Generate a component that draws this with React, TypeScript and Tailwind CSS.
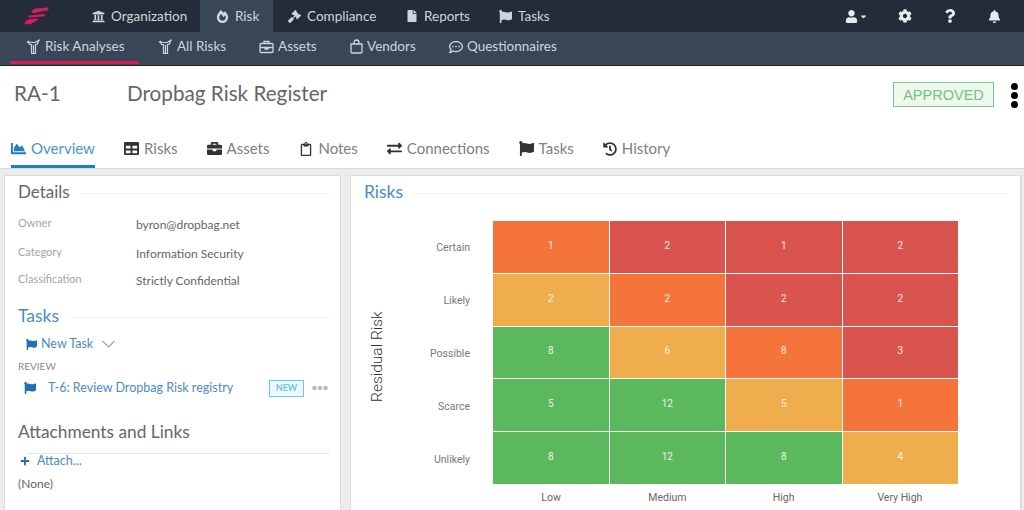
import { ReactNode } from 'react';
import { FaUniversity, FaFireAlt, FaGavel, FaFile, FaFlag, FaUser, FaCog, FaQuestion, FaBell, FaCaretDown, FaChartArea, FaTable, FaBriefcase, FaRegClipboard, FaExchangeAlt, FaHistory, FaRegCommentDots, FaPlus, FaEllipsisH } from 'react-icons/fa';

const RiskIcon = () => (
  <svg width="15" height="15" viewBox="0 0 15 15" fill="none" stroke="currentColor" strokeWidth="1.2">
    <path d="M5.5 14.5V5.5H3.5L2.5 3L6 3.5H9L12.5 1.5L11.5 5L9.5 5.5V14.5Z" />
    <path d="M7.5 6V14.5M1 3.5L3 2M14 1L12 1.5" />
  </svg>
);

const BriefcaseOutline = () => (
  <svg width="15" height="14" viewBox="0 0 15 14" fill="none" stroke="currentColor" strokeWidth="1.3">
    <rect x="1" y="3.5" width="13" height="9" rx="1" />
    <path d="M5 3.5V1.5H10V3.5M1 7.5H14M6 7.5V9H9V7.5" />
  </svg>
);

const BagOutline = () => (
  <svg width="13" height="15" viewBox="0 0 13 15" fill="none" stroke="currentColor" strokeWidth="1.3">
    <path d="M1 5H12V13C12 13.6 11.6 14 11 14H2C1.4 14 1 13.6 1 13Z" />
    <path d="M4 5V3.5C4 2 5 1 6.5 1C8 1 9 2 9 3.5V5" />
  </svg>
);

const Logo = () => (
  <svg width="26" height="18" viewBox="0 0 26 18" fill="#d81b5a">
    <path d="M8 4.5C9 2.5 10 1.5 12 1.5L23 .5C25 .5 25 3 23.5 3.5L15 5C13 5.3 12 6 10 6L9 6C8 6 7.5 5.5 8 4.5Z" />
    <path d="M5 8.5L20 7C22 7 21 9.5 19 9.5L6 10.5C4 10.5 3.5 8.8 5 8.5Z" />
    <path d="M1 15C2 13 4 12.5 7 12L13 11.5C15 11.5 14 13 12 14L8 16.5C6 17.5 3 17.5 1.5 17C.5 16.5 .5 15.8 1 15Z" />
  </svg>
);

const topNav: [ReactNode, string, string][] = [
  [<FaUniversity size={13} />, 'Organization', 'w-[116px] pl-[8px]'],
  [<FaFireAlt size={13} />, 'Risk', 'w-[73px] pl-[16px] bg-[#394656]'],
  [<FaGavel size={13} />, 'Compliance', 'w-[120px] pl-[15px]'],
  [<FaFile size={12} />, 'Reports', 'w-[94px] pl-[13px]'],
  [<FaFlag size={13} />, 'Tasks', 'w-[80px] pl-[12px]'],
];

const subNav: [ReactNode, string, string][] = [
  [<RiskIcon />, 'Risk Analyses', 'w-[129px] pl-[16px] border-b-[3px] border-[#d81b5a]'],
  [<RiskIcon />, 'All Risks', 'w-[120px] pl-[19px] border-b-[3px] border-transparent'],
  [<BriefcaseOutline />, 'Assets', 'w-[91px] border-b-[3px] border-transparent'],
  [<BagOutline />, 'Vendors', 'w-[99px] border-b-[3px] border-transparent'],
  [<FaRegCommentDots size={14} />, 'Questionnaires', 'border-b-[3px] border-transparent'],
];

const tabs: [ReactNode, string, string][] = [
  [<FaChartArea size={15} />, 'Overview', 'w-[84px] text-[#4a94cc] border-[#1f7fc0] ml-[11px] mr-[29px]'],
  [<FaTable size={15} />, 'Risks', 'mr-[29px] border-transparent'],
  [<FaBriefcase size={15} />, 'Assets', 'mr-[30px] border-transparent'],
  [<FaRegClipboard size={14} />, 'Notes', 'mr-[29px] border-transparent'],
  [<FaExchangeAlt size={15} />, 'Connections', 'mr-[29px] border-transparent'],
  [<FaFlag size={15} />, 'Tasks', 'mr-[29px] border-transparent'],
  [<FaHistory size={14} />, 'History', 'border-transparent'],
];

const RED = 'bg-[#d9534f]';
const ORANGE = 'bg-[#f4743b]';
const AMBER = 'bg-[#efad4d]';
const GREEN = 'bg-[#5cb85c]';

const rows: { label: string; cells: [string, number][] }[] = [
  { label: 'Certain', cells: [[ORANGE, 1], [RED, 2], [RED, 1], [RED, 2]] },
  { label: 'Likely', cells: [[AMBER, 2], [ORANGE, 2], [RED, 2], [RED, 2]] },
  { label: 'Possible', cells: [[GREEN, 8], [AMBER, 6], [ORANGE, 8], [RED, 3]] },
  { label: 'Scarce', cells: [[GREEN, 5], [GREEN, 12], [AMBER, 5], [ORANGE, 1]] },
  { label: 'Unlikely', cells: [[GREEN, 8], [GREEN, 12], [GREEN, 8], [AMBER, 4]] },
];

const SectionTitle = ({ title, className }: { title: string; className?: string }) => (
  <div className="flex items-center gap-[11px]">
    <span className={`leading-[24px] ${className ?? 'text-[17px] text-[#666]'}`}>{title}</span>
    <div className="flex-1 h-px bg-[#efefef] mt-[3px]"></div>
  </div>
);

const Field = ({ label, value, className }: { label: string; value: string; className: string }) => (
  <div className={`flex ${className}`}>
    <span className="w-[118px] text-[11px] text-[#a5a5a5]">{label}</span>
    <span className="text-[12px] text-[#666] mt-[1px]">{value}</span>
  </div>
);

export default function App() {
  return (
    <div className="w-[1024px] h-[510px] overflow-hidden bg-[#ececec] font-['Lato','Noto_Sans',sans-serif]">
      <nav className="h-[32px] bg-[#232c38] flex text-[13.5px] text-[#cfd4da]">
        <div className="w-[84px] flex items-center pl-[24px]"><Logo /></div>
        {topNav.map(([icon, label, cls]) => (
          <div key={label} className={`flex items-center gap-[6px] ${cls}`}>{icon}<span>{label}</span></div>
        ))}
        <div className="flex-1 flex justify-end items-center text-[#e8eaec] pr-[23px]">
          <span className="flex items-center mr-[30px]"><FaUser size={13} /><FaCaretDown size={9} className="ml-[1px]" /></span>
          <FaCog size={14} className="mr-[31px]" />
          <FaQuestion size={14} className="mr-[31px]" />
          <FaBell size={13} />
        </div>
      </nav>
      <div className="h-[34px] bg-[#394656] border-b border-[#1d242d] flex pl-[10px] text-[13.5px] text-[#cfd4da]">
        {subNav.map(([icon, label, cls]) => (
          <div key={label} className={`flex items-center gap-[4px] h-[32px] ${cls}`}>{icon}<span>{label}</span></div>
        ))}
      </div>

      <div className="h-[103px] bg-white border-b border-[#d8d8d8] flex flex-col">
        <div className="h-[65px] flex pt-[14px] pl-[14px] text-[#666] text-[20.7px] leading-[26px]">
          <span className="w-[113px]">RA-1</span>
          <span>Dropbag Risk Register</span>
          <div className="ml-auto flex items-start">
            <span className="mt-[2px] h-[25px] w-[101px] flex items-center justify-center border border-[#7dcb85] bg-[#eef8ef] text-[#72c57a] text-[14.5px] font-['Liberation_Sans',sans-serif]">APPROVED</span>
            <div className="mt-[3px] ml-[17px] mr-[6px] flex flex-col gap-[2px]">
              <i className="block w-[7px] h-[7px] rounded-full bg-black"></i>
              <i className="block w-[7px] h-[7px] rounded-full bg-black"></i>
              <i className="block w-[7px] h-[7px] rounded-full bg-black"></i>
            </div>
          </div>
        </div>
        <div className="flex h-[37px] text-[15px] text-[#808080]">
          {tabs.map(([icon, label, cls], i) => (
            <div key={label + i} className={`flex items-center gap-[5px] h-[37px] pt-[1px] border-b-[3px] ${cls}`}>
              <span className={i === 0 ? 'text-[#1f7fc0]' : 'text-[#333]'}>{icon}</span><span>{label}</span>
            </div>
          ))}
        </div>
      </div>

      <main className="flex pt-[6px] pl-[4px] gap-[9px]">
        <section className="w-[337px] h-[340px] bg-white border border-[#dcdcdc] pt-[4px] pl-[13px] pr-[10px]">
          <SectionTitle title="Details" />
          <Field label="Owner" value="byron@dropbag.net" className="mt-[11px]" />
          <Field label="Category" value="Information Security" className="mt-[10px]" />
          <Field label="Classification" value="Strictly Confidential" className="mt-[8px]" />
          <div className="mt-[14px]"><SectionTitle title="Tasks" className="text-[17.5px] text-[#4a8cc8]" /></div>
          <div className="mt-[7px] ml-[8px] flex items-center gap-[4px] text-[12.5px] text-[#4a8cc8]">
            <FaFlag size={11} className="text-[#1e6fb5]" />
            <span>New Task</span>
            <svg width="13" height="8" viewBox="0 0 13 8" fill="none" stroke="#666" strokeWidth="1" className="ml-[5px]"><path d="M.5 1L6.5 7L12.5 1" /></svg>
          </div>
          <div className="mt-[5px] text-[10px] text-[#8c8c8c]">REVIEW</div>
          <div className="mt-[5px] ml-[6px] flex items-center text-[12.5px] text-[#4a8cc8]">
            <FaFlag size={12} className="text-[#1e6fb5] mr-[12px]" />
            <span>T-6: Review Dropbag Risk registry</span>
            <span className="ml-auto flex items-center justify-center w-[35px] h-[17px] border border-[#6cc8e8] bg-[#eef8fc] text-[#6cc8e8] text-[9px] font-bold">NEW</span>
            <FaEllipsisH size={16} className="ml-[8px] mr-[2px] text-[#bbb]" />
          </div>
          <div className="mt-[22px] text-[17.3px] leading-[24px] text-[#666]">Attachments and Links</div>
          <div className="ml-[9px] mt-[9px] h-px bg-[#e6e6e6]"></div>
          <div className="-mt-[2px] ml-[2px] flex items-center gap-[7px] text-[12.5px] text-[#4a8cc8]">
            <FaPlus size={10} className="text-[#1e6fb5]" />
            <span>Attach...</span>
          </div>
          <div className="mt-[5px] text-[12px] text-[#666]">(None)</div>
        </section>

        <section className="w-[672px] h-[340px] bg-white border border-[#dcdcdc] border-r-2 pt-[4px] pl-[13px] pr-[13px]">
          <SectionTitle title="Risks" className="text-[17.5px] text-[#4a8cc8]" />
          <div className="flex mt-[17px] font-['Roboto',sans-serif]">
            <div className="w-[22px] flex items-center justify-center ml-[2px] mr-[1px] text-[15.5px] font-light text-[#333]">
              <span className="whitespace-nowrap -rotate-90 mt-[6px]">Residual Risk</span>
            </div>
            <div className="w-[104px] flex flex-col">
              {rows.map((row) => (
                <div key={row.label} className="h-[53px] pr-[23px] pt-[19px] text-right text-[10.5px] text-[#777]">{row.label}</div>
              ))}
            </div>
            <div className="w-[465px] grid grid-cols-4 grid-rows-5 gap-px h-[263px]">
              {rows.flatMap((row) =>
                row.cells.map(([color, n], i) => (
                  <div key={row.label + i} className={`flex items-center justify-center pb-[3px] text-[10px] text-white/85 ${color}`}>{n}</div>
                ))
              )}
            </div>
          </div>
          <div className="flex ml-[129px] w-[465px] mt-[4px] font-['Roboto',sans-serif] text-[10.5px] text-[#666]">
            {['Low', 'Medium', 'High', 'Very High'].map((c) => (
              <span key={c} className="flex-1 text-center">{c}</span>
            ))}
          </div>
        </section>
      </main>
    </div>
  );
}
